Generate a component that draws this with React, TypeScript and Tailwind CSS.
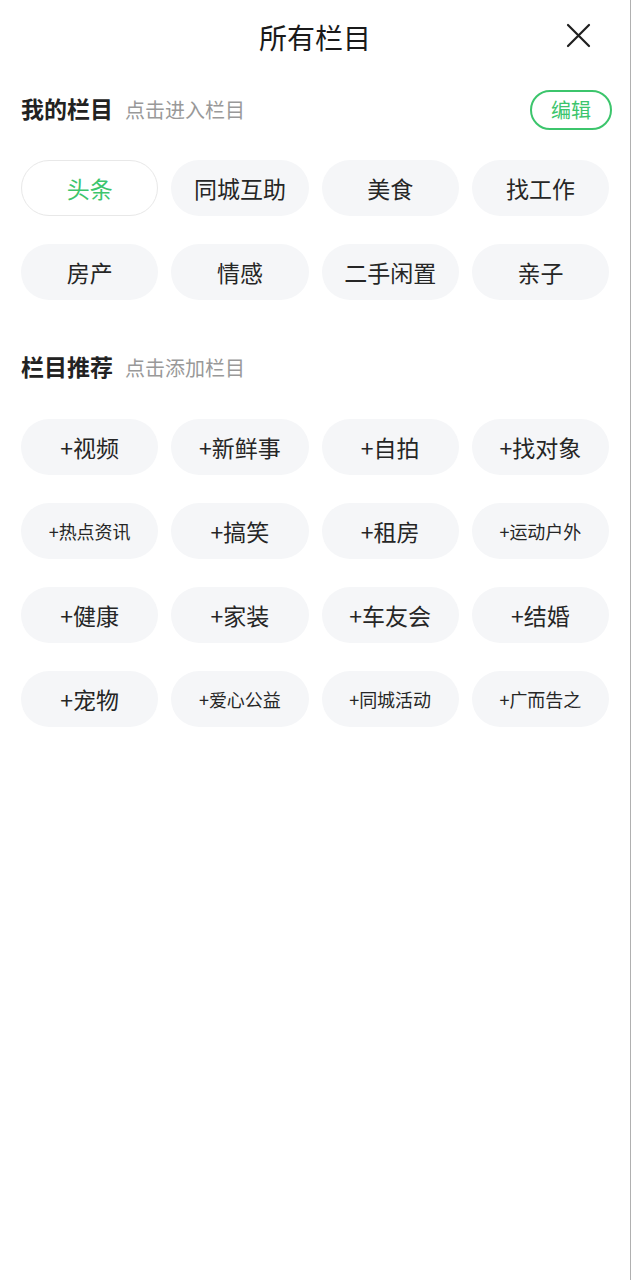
import React from "react";

const FONT = "font-['Noto_Sans_CJK_SC','Noto_Sans',sans-serif]";

const myChannels = ["头条", "同城互助", "美食", "找工作", "房产", "情感", "二手闲置", "亲子"];

const recommended: { label: string; small?: boolean }[] = [
  { label: "视频" },
  { label: "新鲜事" },
  { label: "自拍" },
  { label: "找对象" },
  { label: "热点资讯", small: true },
  { label: "搞笑" },
  { label: "租房" },
  { label: "运动户外", small: true },
  { label: "健康" },
  { label: "家装" },
  { label: "车友会" },
  { label: "结婚" },
  { label: "宠物" },
  { label: "爱心公益", small: true },
  { label: "同城活动", small: true },
  { label: "广而告之", small: true },
];

function CloseIcon() {
  return (
    <svg width="25" height="25" viewBox="0 0 25 25" fill="none">
      <path d="M2 2L23 23M23 2L2 23" stroke="#1f1f1f" strokeWidth="2.2" strokeLinecap="round" />
    </svg>
  );
}

function SectionHeader({ title, hint, action }: { title: string; hint: string; action?: React.ReactNode }) {
  return (
    <div className="flex h-[40px] items-center justify-between">
      <div className="mb-[4px] flex items-baseline gap-[12px]">
        <span className="text-[23px] font-bold text-[#222]">{title}</span>
        <span className="text-[20px] text-[#999]">{hint}</span>
      </div>
      {action}
    </div>
  );
}

export default function App() {
  return (
    <div className={`${FONT} min-h-screen w-[631px] border-r border-[#b0b0b0] bg-white`}>
      <header className="relative flex h-[74px] items-center justify-center">
        <h1 className="text-[28px] font-normal text-[#1a1a1a]">所有栏目</h1>
        <button className="absolute right-[39px] top-[23px]">
          <CloseIcon />
        </button>
      </header>

      <section className="px-[21px] pt-[16px]">
        <SectionHeader
          title="我的栏目"
          hint="点击进入栏目"
          action={
            <button className="-mr-[3px] flex h-[40px] w-[82px] items-center justify-center rounded-full border-2 border-[#3cc56c] text-[20px] text-[#3cc56c]">
              编辑
            </button>
          }
        />
        <div className="mt-[30px] grid grid-cols-4 gap-x-[13px] gap-y-[28px]">
          {myChannels.map((name, i) => (
            <div
              key={name}
              className={
                i === 0
                  ? "flex h-[56px] items-center justify-center rounded-full border border-[#e8e8e8] bg-white text-[23px] text-[#3cc56c]"
                  : "flex h-[56px] items-center justify-center rounded-full bg-[#f5f6f8] text-[23px] text-[#262626]"
              }
            >
              {name}
            </div>
          ))}
        </div>
      </section>

      <section className="px-[21px] pt-[48px]">
        <SectionHeader title="栏目推荐" hint="点击添加栏目" />
        <div className="mt-[31px] grid grid-cols-4 gap-x-[13px] gap-y-[28px]">
          {recommended.map((item) => (
            <div
              key={item.label}
              className={
                item.small
                  ? "flex h-[56px] items-center justify-center rounded-full bg-[#f5f6f8] text-[18px] text-[#262626]"
                  : "flex h-[56px] items-center justify-center rounded-full bg-[#f5f6f8] text-[23px] text-[#262626]"
              }
            >
              +{item.label}
            </div>
          ))}
        </div>
      </section>
    </div>
  );
}
